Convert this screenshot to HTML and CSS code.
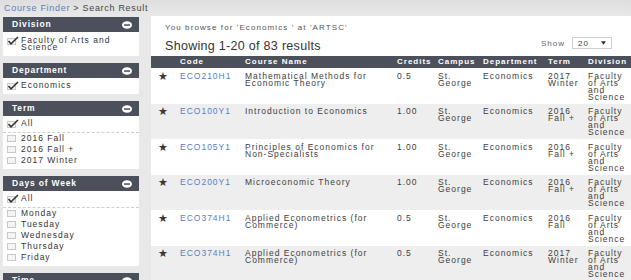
FILE: index.html
```html
<!DOCTYPE html>
<html>
<head>
<meta charset="utf-8">
<title>Search Result</title>
<link rel="stylesheet" href="styles.css">
</head>
<body>
<div class="crumb"><a class="crumb-link" href="#">Course Finder</a> &gt; Search Result</div>
<div class="layout">
  <aside class="sidebar">
    <section class="panel">
      <div class="panel-head"><span>Division</span><svg class="minus" viewBox="0 0 10 8"><ellipse cx="5" cy="4" rx="5" ry="3.8" fill="#fff"/><rect x="2" y="3.3" width="6" height="1.5" fill="#4b505b"/></svg></div>
      <div class="opt opt-main tall"><svg class="cb" viewBox="0 0 12 9"><rect x="0.5" y="2.5" width="8" height="6" fill="#f4f4f4" stroke="#c8c8c8"/><path d="M1.5 5 L4 7.8 L11 1" fill="none" stroke="#333" stroke-width="1.5"/></svg><span>Faculty of Arts and Science</span></div>
    </section>
    <section class="panel">
      <div class="panel-head"><span>Department</span><svg class="minus" viewBox="0 0 10 8"><ellipse cx="5" cy="4" rx="5" ry="3.8" fill="#fff"/><rect x="2" y="3.3" width="6" height="1.5" fill="#4b505b"/></svg></div>
      <div class="opt opt-main"><svg class="cb" viewBox="0 0 12 9"><rect x="0.5" y="2.5" width="8" height="6" fill="#f4f4f4" stroke="#c8c8c8"/><path d="M1.5 5 L4 7.8 L11 1" fill="none" stroke="#333" stroke-width="1.5"/></svg><span>Economics</span></div>
    </section>
    <section class="panel">
      <div class="panel-head"><span>Term</span><svg class="minus" viewBox="0 0 10 8"><ellipse cx="5" cy="4" rx="5" ry="3.8" fill="#fff"/><rect x="2" y="3.3" width="6" height="1.5" fill="#4b505b"/></svg></div>
      <div class="opt opt-main opt-all"><svg class="cb" viewBox="0 0 12 9"><rect x="0.5" y="2.5" width="8" height="6" fill="#f4f4f4" stroke="#c8c8c8"/><path d="M1.5 5 L4 7.8 L11 1" fill="none" stroke="#333" stroke-width="1.5"/></svg><span>All</span></div>
      <ul class="opt-list">
        <li class="opt opt-item"><svg class="cb" viewBox="0 0 12 9"><rect x="0.5" y="1.5" width="8" height="6" fill="#f4f4f4" stroke="#c8c8c8"/></svg><span>2016 Fall</span></li>
        <li class="opt opt-item"><svg class="cb" viewBox="0 0 12 9"><rect x="0.5" y="1.5" width="8" height="6" fill="#f4f4f4" stroke="#c8c8c8"/></svg><span>2016 Fall +</span></li>
        <li class="opt opt-item"><svg class="cb" viewBox="0 0 12 9"><rect x="0.5" y="1.5" width="8" height="6" fill="#f4f4f4" stroke="#c8c8c8"/></svg><span>2017 Winter</span></li>
      </ul>
    </section>
    <section class="panel">
      <div class="panel-head"><span>Days of Week</span><svg class="minus" viewBox="0 0 10 8"><ellipse cx="5" cy="4" rx="5" ry="3.8" fill="#fff"/><rect x="2" y="3.3" width="6" height="1.5" fill="#4b505b"/></svg></div>
      <div class="opt opt-main opt-all"><svg class="cb" viewBox="0 0 12 9"><rect x="0.5" y="2.5" width="8" height="6" fill="#f4f4f4" stroke="#c8c8c8"/><path d="M1.5 5 L4 7.8 L11 1" fill="none" stroke="#333" stroke-width="1.5"/></svg><span>All</span></div>
      <ul class="opt-list">
        <li class="opt opt-item"><svg class="cb" viewBox="0 0 12 9"><rect x="0.5" y="1.5" width="8" height="6" fill="#f4f4f4" stroke="#c8c8c8"/></svg><span>Monday</span></li>
        <li class="opt opt-item"><svg class="cb" viewBox="0 0 12 9"><rect x="0.5" y="1.5" width="8" height="6" fill="#f4f4f4" stroke="#c8c8c8"/></svg><span>Tuesday</span></li>
        <li class="opt opt-item"><svg class="cb" viewBox="0 0 12 9"><rect x="0.5" y="1.5" width="8" height="6" fill="#f4f4f4" stroke="#c8c8c8"/></svg><span>Wednesday</span></li>
        <li class="opt opt-item"><svg class="cb" viewBox="0 0 12 9"><rect x="0.5" y="1.5" width="8" height="6" fill="#f4f4f4" stroke="#c8c8c8"/></svg><span>Thursday</span></li>
        <li class="opt opt-item"><svg class="cb" viewBox="0 0 12 9"><rect x="0.5" y="1.5" width="8" height="6" fill="#f4f4f4" stroke="#c8c8c8"/></svg><span>Friday</span></li>
      </ul>
    </section>
    <section class="panel">
      <div class="panel-head"><span>Time</span><svg class="minus" viewBox="0 0 10 8"><ellipse cx="5" cy="4" rx="5" ry="3.8" fill="#fff"/><rect x="2" y="3.3" width="6" height="1.5" fill="#4b505b"/></svg></div>
      <div class="opt opt-main"><span>&nbsp;</span></div>
    </section>
  </aside>

  <main class="main">
    <div class="main-head">
      <div class="summary">
        <div class="browse">You browse for 'Economics ' at 'ARTSC'</div>
        <div class="showing">Showing 1-20 of 83 results</div>
      </div>
      <div class="show">
        <span>Show</span>
        <div class="select"><span>20</span><svg class="caret" viewBox="0 0 6 4"><path d="M0 0 H6 L3 4 Z" fill="#333"/></svg></div>
      </div>
    </div>
    <table class="results">
      <colgroup>
        <col class="c-star"><col class="c-code"><col class="c-name"><col class="c-cred"><col class="c-camp"><col class="c-dept"><col class="c-term"><col class="c-div">
      </colgroup>
      <thead>
        <tr><th></th><th>Code</th><th>Course Name</th><th>Credits</th><th>Campus</th><th>Department</th><th>Term</th><th>Division</th></tr>
      </thead>
      <tbody>
        <tr><td class="star">★</td><td class="code"><a href="#">ECO210H1</a></td><td>Mathematical Methods for Economic Theory</td><td>0.5</td><td>St. George</td><td>Economics</td><td>2017 Winter</td><td>Faculty of Arts and Science</td></tr>
        <tr><td class="star">★</td><td class="code"><a href="#">ECO100Y1</a></td><td>Introduction to Economics</td><td>1.00</td><td>St. George</td><td>Economics</td><td>2016 Fall +</td><td>Faculty of Arts and Science</td></tr>
        <tr><td class="star">★</td><td class="code"><a href="#">ECO105Y1</a></td><td>Principles of Economics for Non-Specialists</td><td>1.00</td><td>St. George</td><td>Economics</td><td>2016 Fall +</td><td>Faculty of Arts and Science</td></tr>
        <tr><td class="star">★</td><td class="code"><a href="#">ECO200Y1</a></td><td>Microeconomic Theory</td><td>1.00</td><td>St. George</td><td>Economics</td><td>2016 Fall +</td><td>Faculty of Arts and Science</td></tr>
        <tr><td class="star">★</td><td class="code"><a href="#">ECO374H1</a></td><td>Applied Econometrics (for Commerce)</td><td>0.5</td><td>St. George</td><td>Economics</td><td>2016 Fall</td><td>Faculty of Arts and Science</td></tr>
        <tr><td class="star">★</td><td class="code"><a href="#">ECO374H1</a></td><td>Applied Econometrics (for Commerce)</td><td>0.5</td><td>St. George</td><td>Economics</td><td>2017 Winter</td><td>Faculty of Arts and Science</td></tr>
      </tbody>
    </table>
  </main>
</div>
</body>
</html>
```

FILE: styles.css
```css
* { box-sizing: border-box; }
html { overflow: hidden; }
body {
  margin: 0;
  width: 631px;
  background: #e8e8e8;
  font-family: "Liberation Sans", Arial, sans-serif;
  font-size: 8.5px;
  letter-spacing: 1px;
  color: #333;
}
.crumb {
  height: 16px;
  line-height: 16px;
  padding-left: 4px;
  font-size: 9px;
  letter-spacing: 0.7px;
  color: #454545;
  background: linear-gradient(#dedede, #e8e8e8);
}
.crumb-link { color: #5a7dc2; text-decoration: none; }

.layout {
  display: flex;
  align-items: flex-start;
  gap: 12px;
  padding-left: 3px;
}
.sidebar {
  width: 136px;
  flex: none;
  margin-top: 1px;
  display: flex;
  flex-direction: column;
  gap: 7px;
}
.panel { background: #fff; }
.panel-head {
  height: 15px;
  line-height: 15px;
  background: #4b505b;
  color: #fff;
  font-weight: bold;
  letter-spacing: 0.8px;
  display: flex;
  align-items: center;
  justify-content: space-between;
  padding: 0 7px 0 9px;
}
.minus { width: 10px; height: 8px; display: block; }

.opt { display: flex; align-items: flex-start; }
.cb { width: 12px; height: 9px; flex: none; margin-right: 2px; display: block; }
.opt-main { line-height: 7px; padding: 4px 4px; }
.opt-main .cb { margin-top: -1px; }
.opt-main.tall { padding: 5px 4px; }
.opt-all { border-bottom: 1px dashed #cfcfcf; }
.opt-list { list-style: none; margin: 0; padding: 0 0 3px; }
.opt-item { line-height: 11px; height: 11px; padding: 0 4px; }
.opt-item .cb { margin-top: 1px; }

.main {
  flex: 1;
  background: #fff;
  min-height: 300px;
}
.main-head {
  display: flex;
  justify-content: space-between;
  padding: 7px 19px 3px 14px;
}
.browse {
  font-size: 8px;
  line-height: 10px;
  letter-spacing: 1.1px;
  color: #555;
}
.showing {
  margin-top: 6px;
  font-size: 12.5px;
  line-height: 14px;
  letter-spacing: 0.3px;
  color: #333;
}
.show {
  display: flex;
  align-items: center;
  gap: 7px;
  height: 12px;
  margin-top: 14px;
  font-size: 8px;
  color: #666;
}
.select {
  width: 40px;
  height: 12px;
  border: 1px solid #cfcfcf;
  display: flex;
  align-items: center;
  justify-content: space-between;
  padding: 0 5px 0 5px;
  color: #444;
}
.caret { width: 5px; height: 4px; display: block; }

.results {
  width: 100%;
  border-collapse: collapse;
  table-layout: fixed;
}
.c-star { width: 27px; }
.c-code { width: 65px; }
.c-name { width: 152px; }
.c-cred { width: 41px; }
.c-camp { width: 45px; }
.c-dept { width: 65px; }
.c-term { width: 40px; }
.c-div { width: 45px; }
.results th {
  background: #4b505b;
  color: #fff;
  font-weight: bold;
  font-size: 8px;
  text-align: left;
  height: 12px;
  line-height: 12px;
  padding: 0 2px;
  white-space: nowrap;
}
.results td {
  vertical-align: top;
  padding: 4.5px 2px 3px;
  line-height: 7px;
  color: #3d3d3d;
}
.results tbody tr:nth-child(even) td { background: #eeeeee; }
.results td.star {
  padding-left: 7px;
  font-size: 11px;
  color: #3a3a3a;
  letter-spacing: 0;
}
.code a { color: #5a7dc2; text-decoration: none; }
```
